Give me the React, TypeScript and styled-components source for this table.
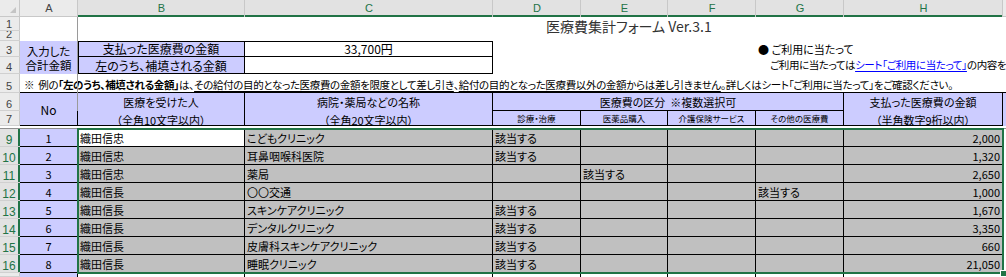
import React from "react";
import styled, { createGlobalStyle } from "styled-components";

const GREEN = "#217346";
const PURPLE = "#ccccff";
const GRAY = "#c0c0c0";
const JP = `"Noto Sans CJK JP", "Noto Sans", sans-serif`;

const GlobalStyle = createGlobalStyle`
  html, body { margin: 0; padding: 0; background: #fff; }
  body { font-family: ${JP}; color: #000; }
`;

type Align = "left" | "center" | "right";
type VAlign = "top" | "center" | "bottom";

const edgeShadow = (edges = "") => {
  const parts: string[] = [];
  if (edges.includes("t")) parts.push("inset 0 1px 0 #000");
  if (edges.includes("b")) parts.push("inset 0 -1px 0 #000");
  if (edges.includes("l")) parts.push("inset 1px 0 0 #000");
  if (edges.includes("r")) parts.push("inset -1px 0 0 #000");
  return parts.length ? parts.join(", ") : "none";
};

const justify = { left: "flex-start", center: "center", right: "flex-end" };
const vert = { top: "flex-start", center: "center", bottom: "flex-end" };

const Sheet = styled.div`
  display: grid;
  grid-template-columns: 20px 58px 167px 248px 88px 87px 88px 88px 159px 1fr;
  grid-template-rows: 17px 14px 10px 16px 17px 19px 18px 15px 3px repeat(8, 18px) 1fr;
  width: 1006px;
  height: 277px;
  overflow: hidden;
  background: #fff;
`;

const Corner = styled.div`
  grid-column: 1;
  grid-row: 1;
  background: #ebebeb;
  box-shadow: inset -1px -1px 0 #c8c8c8;
  display: flex;
  align-items: flex-end;
  justify-content: flex-end;
  padding: 0 4px 4px 0;
  &::after {
    content: "";
    border-style: solid;
    border-width: 0 0 6px 6px;
    border-color: transparent transparent #c4c4c4 transparent;
  }
`;

const ColHead = styled.div<{ $c: number; $sel?: boolean }>`
  grid-column: ${(p) => p.$c};
  grid-row: 1;
  background: ${(p) => (p.$sel ? "#e2e2e2" : "#ebebeb")};
  color: ${(p) => (p.$sel ? GREEN : "#444")};
  box-shadow: inset -1px 0 0 #c8c8c8,
    ${(p) => (p.$sel ? `inset 0 -2px 0 ${GREEN}` : "inset 0 -1px 0 #c8c8c8")};
  font: 11px "Liberation Sans", Arial, sans-serif;
  display: flex;
  align-items: center;
  justify-content: center;
  padding-bottom: 1px;
`;

const RowHead = styled.div<{ $r: number; $sel?: boolean }>`
  grid-column: 1;
  grid-row: ${(p) => p.$r};
  background: ${(p) => (p.$sel ? "#e2e2e2" : "#ebebeb")};
  color: ${(p) => (p.$sel ? GREEN : "#444")};
  box-shadow: inset 0 -1px 0 #d0d0d0,
    ${(p) => (p.$sel ? `inset -2px 0 0 ${GREEN}` : "inset -1px 0 0 #c8c8c8")};
  font: ${(p) => (p.$sel ? 12 : 11)}px "Liberation Sans", Arial, sans-serif;
  line-height: 11px;
  display: flex;
  align-items: flex-end;
  justify-content: center;
  padding: 0 2px 1px 0;
  overflow: hidden;
`;

const Cell = styled.div<{
  $c: number;
  $r: number;
  $cs?: number;
  $rs?: number;
  $bg?: string;
  $align?: Align;
  $v?: VAlign;
  $edges?: string;
  $size?: number;
  $indent?: number;
}>`
  grid-column: ${(p) => p.$c} / span ${(p) => p.$cs ?? 1};
  grid-row: ${(p) => p.$r} / span ${(p) => p.$rs ?? 1};
  background: ${(p) => p.$bg ?? "transparent"};
  box-shadow: ${(p) => edgeShadow(p.$edges)};
  display: flex;
  justify-content: ${(p) => justify[p.$align ?? "left"]};
  align-items: ${(p) => vert[p.$v ?? "center"]};
  padding: 0 3px 0 ${(p) => p.$indent ?? 2}px;
  font-size: ${(p) => p.$size ?? 11}px;
  line-height: 1;
  font-feature-settings: "palt";
  white-space: nowrap;
  min-width: 0;
`;

const Note = styled(Cell)`
  padding-bottom: 3px;
  font-size: 10.5px;
  letter-spacing: -0.35px;
`;

const Guide = styled(Cell)`
  letter-spacing: -0.4px;
`;

const Stack = styled.div`
  display: flex;
  flex-direction: column;
  align-items: center;
  line-height: 14px;
  font-size: 11.5px;
`;

const Title = styled.div`
  grid-column: 5 / span 6;
  grid-row: 2 / span 2;
  display: flex;
  align-items: center;
  padding: 0 0 6px 53px;
  font-size: 14px;
  color: #333;
  white-space: nowrap;
  font-feature-settings: "palt";
`;

const Bold = styled.b`
  font-weight: 700;
`;

const Under = styled.span`
  text-decoration: underline;
  text-underline-offset: 2px;
`;

const Link = styled.span`
  color: #0000ff;
  text-decoration: underline;
  text-underline-offset: 2px;
`;

const FreezeV = styled.div`
  grid-column: 2;
  grid-row: 2 / span 6;
  box-shadow: inset -1px 0 0 #9a9a9a;
  pointer-events: none;
`;

const FreezeH = styled.div`
  grid-column: 1 / -1;
  grid-row: 9;
  background: #fff;
  box-shadow: inset 0 -1px 0 #8f8f8f;
`;

const Selection = styled.div`
  grid-column: 3 / span 7;
  grid-row: 10 / span 8;
  margin: -1px;
  border: 2px solid ${GREEN};
  position: relative;
  pointer-events: none;
`;

const Handle = styled.div`
  position: absolute;
  right: -5px;
  bottom: -5px;
  width: 5px;
  height: 5px;
  background: ${GREEN};
  border: 1px solid #fff;
`;

const COLS = ["A", "B", "C", "D", "E", "F", "G", "H"];

const records = [
  { name: "織田信忠", place: "こどもクリニック", cat: 0, amount: "2,000" },
  { name: "織田信忠", place: "耳鼻咽喉科医院", cat: 0, amount: "1,320" },
  { name: "織田信忠", place: "薬局", cat: 1, amount: "2,650" },
  { name: "織田信長", place: "〇〇交通", cat: 3, amount: "1,000" },
  { name: "織田信長", place: "スキンケアクリニック", cat: 0, amount: "1,670" },
  { name: "織田信長", place: "デンタルクリニック", cat: 0, amount: "3,350" },
  { name: "織田信長", place: "皮膚科スキンケアクリニック", cat: 0, amount: "660" },
  { name: "織田信長", place: "睡眠クリニック", cat: 0, amount: "21,050" },
];

const categories = ["診療・治療", "医薬品購入", "介護保険サービス", "その他の医療費"];

export default function App() {
  const rowLabels = [1, 2, 3, 4, 5, 6, 7, 8, 9, 10, 11, 12, 13, 14, 15, 16, 17];

  return (
    <>
      <GlobalStyle />
      <Sheet>
        <Corner />
        {COLS.map((c, i) => (
          <ColHead key={c} $c={i + 2} $sel={i > 0}>
            {c}
          </ColHead>
        ))}
        <ColHead $c={10} />
        {rowLabels.map((n) => (
          <RowHead key={n} $r={n + 1} $sel={n >= 9 && n <= 16}>
            {n === 8 || n === 17 ? "" : n}
          </RowHead>
        ))}

        <Title>医療費集計フォーム Ver.3.1</Title>

        {/* rows 3-4: totals */}
        <Cell $c={2} $r={4} $rs={2} $bg={PURPLE} $align="center">
          <Stack>
            <span>入力した</span>
            <span>合計金額</span>
          </Stack>
        </Cell>
        <Cell $c={3} $r={4} $bg={PURPLE} $align="center" $edges="tlrb" $size={12}>
          支払った医療費の金額
        </Cell>
        <Cell $c={4} $r={4} $align="center" $edges="trb" $size={12}>
          33,700円
        </Cell>
        <Cell $c={3} $r={5} $bg={PURPLE} $align="center" $edges="lrb" $size={12}>
          左のうち、補填される金額
        </Cell>
        <Cell $c={4} $r={5} $edges="rb" />
        <Cell $c={8} $r={4} $cs={3} $size={11}>
          ●&nbsp;ご利用に当たって
        </Cell>
        <Guide $c={8} $r={5} $cs={3} $size={10.5} $indent={14}>
          ご利用に当たっては<Link>シート「ご利用に当たって」</Link>の内容をご確認ください。
        </Guide>

        {/* row 5: note */}
        <Note $c={2} $r={6} $cs={9} $edges="b" $v="bottom" $indent={4}>
          ※&nbsp;&nbsp;例の<Bold>「左のうち、補填される金額」</Bold>は、
          <Under>その給付の目的となった医療費の金額を限度として差し引き</Under>、
          <Under>給付の目的となった医療費以外の金額からは差し引きません</Under>
          。詳しくはシート「ご利用に当たって」をご確認ください。
        </Note>

        {/* rows 6-7: table header */}
        <Cell $c={2} $r={7} $rs={2} $bg={PURPLE} $align="center" $edges="rb" $size={12}>
          No
        </Cell>
        <Cell $c={3} $r={7} $bg={PURPLE} $align="center" $edges="r">
          医療を受けた人
        </Cell>
        <Cell $c={3} $r={8} $bg={PURPLE} $align="center" $v="bottom" $edges="rb">
          （全角10文字以内）
        </Cell>
        <Cell $c={4} $r={7} $bg={PURPLE} $align="center" $edges="r">
          病院・薬局などの名称
        </Cell>
        <Cell $c={4} $r={8} $bg={PURPLE} $align="center" $v="bottom" $edges="rb">
          （全角20文字以内）
        </Cell>
        <Cell $c={5} $r={7} $cs={4} $bg={PURPLE} $align="center" $edges="rb">
          医療費の区分&nbsp;&nbsp;※複数選択可
        </Cell>
        {categories.map((label, i) => (
          <Cell key={label} $c={5 + i} $r={8} $bg={PURPLE} $align="center" $edges="rb" $size={8.5}>
            {label}
          </Cell>
        ))}
        <Cell $c={9} $r={7} $bg={PURPLE} $align="center" $edges="r">
          支払った医療費の金額
        </Cell>
        <Cell $c={9} $r={8} $bg={PURPLE} $align="center" $v="bottom" $edges="rb">
          （半角数字9桁以内）
        </Cell>
        <Cell $c={10} $r={7} $rs={2} $bg={PURPLE} />

        <FreezeV />
        <FreezeH />

        {/* rows 9-16: data */}
        {records.map((rec, i) => {
          const r = 10 + i;
          return (
            <React.Fragment key={i}>
              <Cell $c={2} $r={r} $bg={PURPLE} $align="center" $edges="rb">
                {i + 1}
              </Cell>
              <Cell $c={3} $r={r} $bg={i === 0 ? "#fff" : GRAY} $edges="rb">
                {rec.name}
              </Cell>
              <Cell $c={4} $r={r} $bg={GRAY} $edges="rb">
                {rec.place}
              </Cell>
              {categories.map((label, k) => (
                <Cell key={label} $c={5 + k} $r={r} $bg={GRAY} $edges="rb">
                  {rec.cat === k ? "該当する" : ""}
                </Cell>
              ))}
              <Cell $c={9} $r={r} $bg={GRAY} $align="right" $edges="rb">
                {rec.amount}
              </Cell>
            </React.Fragment>
          );
        })}

        {/* row 17 (cut off) */}
        <Cell $c={2} $r={18} $bg={PURPLE} $edges="r" />
        {[3, 4, 5, 6, 7, 8, 9].map((c) => (
          <Cell key={c} $c={c} $r={18} $edges="r" />
        ))}

        <Selection>
          <Handle />
        </Selection>
      </Sheet>
    </>
  );
}
